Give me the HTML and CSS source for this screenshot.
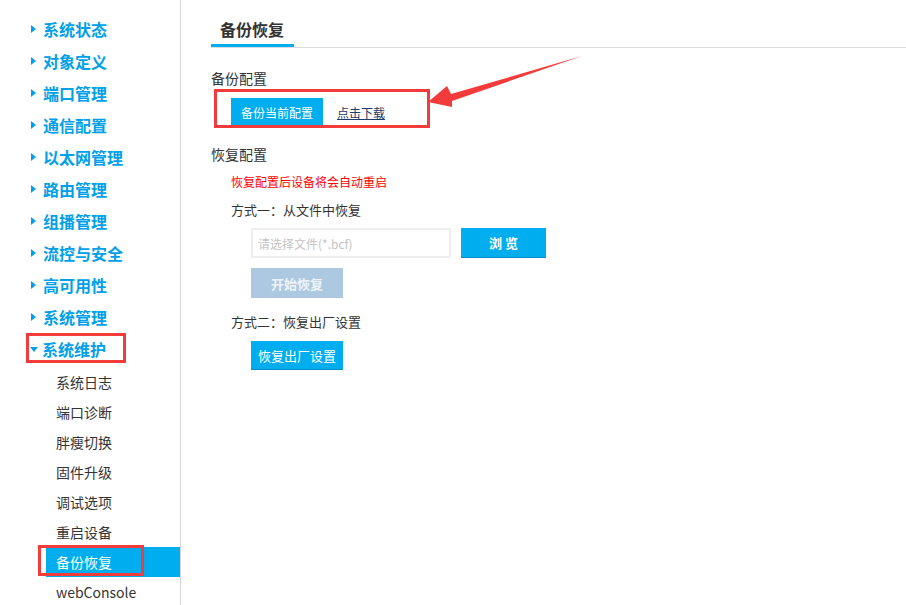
FILE: index.html
```html
<!DOCTYPE html>
<html lang="zh-CN">
<head>
    <meta charset="UTF-8">
    <title>备份恢复</title>
    <link rel="stylesheet" href="styles.css">
</head>
<body>
    <div class="page">
        <ul class="sidebar">
            <li class="nav-item"><span class="arrow"></span>系统状态</li>
            <li class="nav-item"><span class="arrow"></span>对象定义</li>
            <li class="nav-item"><span class="arrow"></span>端口管理</li>
            <li class="nav-item"><span class="arrow"></span>通信配置</li>
            <li class="nav-item"><span class="arrow"></span>以太网管理</li>
            <li class="nav-item"><span class="arrow"></span>路由管理</li>
            <li class="nav-item"><span class="arrow"></span>组播管理</li>
            <li class="nav-item"><span class="arrow"></span>流控与安全</li>
            <li class="nav-item"><span class="arrow"></span>高可用性</li>
            <li class="nav-item"><span class="arrow"></span>系统管理</li>
            <li class="nav-item open marked"><span class="arrow down"></span>系统维护</li>
            <li class="sub-list">
                <ul>
                    <li class="sub-item">系统日志</li>
                    <li class="sub-item">端口诊断</li>
                    <li class="sub-item">胖瘦切换</li>
                    <li class="sub-item">固件升级</li>
                    <li class="sub-item">调试选项</li>
                    <li class="sub-item">重启设备</li>
                    <li class="sub-item active">备份恢复</li>
                    <li class="sub-item">webConsole</li>
                </ul>
            </li>
        </ul>

        <div class="content">
            <div class="page-head">
                <span class="page-title">备份恢复</span>
            </div>

            <div class="section-label first">备份配置</div>
            <div class="backup-row">
                <button class="btn">备份当前配置</button>
                <a class="download-link" href="#">点击下载</a>
                <svg class="pointer" width="170" height="65" viewBox="0 0 170 65">
                    <polygon points="8,52 27,36 31,44 162,6 32,51 32,57" fill="#f43b3b"/>
                </svg>
            </div>

            <div class="section-label restore">恢复配置</div>
            <div class="restore-box">
                <div class="warning">恢复配置后设备将会自动重启</div>
                <div class="way">方式一：从文件中恢复</div>
                <div class="way-body">
                    <div class="file-row">
                        <input class="file-input" type="text" placeholder="请选择文件(*.bcf)">
                        <button class="btn btn-browse">浏 览</button>
                    </div>
                    <button class="btn btn-disabled">开始恢复</button>
                </div>
                <div class="way second">方式二：恢复出厂设置</div>
                <div class="way-body">
                    <button class="btn btn-factory">恢复出厂设置</button>
                </div>
            </div>
        </div>
    </div>
</body>
</html>
```

FILE: styles.css
```css
body {
    margin: 0;
    font-family: "Noto Sans CJK SC", "Liberation Sans", sans-serif;
    color: #333;
    background-color: #fff;
    overflow: hidden;
}

.page {
    display: flex;
    height: 605px;
}

ul {
    list-style: none;
    margin: 0;
    padding: 0;
}

/* left menu */
.sidebar {
    width: 180px;
    flex-shrink: 0;
    border-right: 1px solid #d4d4d4;
    padding-top: 13px;
}

.nav-item {
    position: relative;
    height: 32px;
    line-height: 32px;
    padding-left: 31px;
    font-size: 16px;
    font-weight: bold;
    color: #00a0e9;
    display: flex;
    align-items: center;
}

.arrow {
    width: 0;
    height: 0;
    border-left: 5px solid #00a0e9;
    border-top: 4px solid transparent;
    border-bottom: 4px solid transparent;
    margin-right: 7px;
}

.arrow.down {
    border-left: 4px solid transparent;
    border-right: 4px solid transparent;
    border-top: 5px solid #00a0e9;
    border-bottom: none;
    margin-right: 4px;
    margin-left: -1px;
}

.marked::after {
    content: "";
    position: absolute;
    left: 26px;
    top: 0;
    width: 100px;
    height: 30px;
    border: 3px solid #f43b3b;
    box-sizing: border-box;
}

.sub-list ul {
    padding-top: 2px;
}

.sub-item {
    position: relative;
    height: 30px;
    line-height: 30px;
    margin-left: 46px;
    padding-left: 10px;
    font-size: 14px;
    color: #333;
}

.sub-item.active {
    background-color: #00aeef;
    color: #fff;
}

.sub-item.active::after {
    content: "";
    position: absolute;
    left: -8px;
    top: -2px;
    width: 106px;
    height: 31px;
    border: 3px solid #f43b3b;
    box-sizing: border-box;
}

/* main area */
.content {
    flex: 1;
    padding-left: 30px;
}

.page-head {
    padding-top: 14px;
    border-bottom: 1px solid #ddd;
}

.page-title {
    display: inline-block;
    padding: 0 10px 0 9px;
    line-height: 30px;
    font-size: 16px;
    font-weight: bold;
    border-bottom: 3px solid #00aeef;
    vertical-align: top;
}

.section-label {
    font-size: 14px;
    line-height: 20px;
}

.section-label.first {
    margin-top: 20px;
}

.section-label.restore {
    margin-top: 17px;
}

.backup-row {
    position: relative;
    display: flex;
    align-items: center;
    margin-top: 10px;
    margin-left: 20px;
}

.backup-row::after {
    content: "";
    position: absolute;
    left: -17px;
    top: -9px;
    width: 216px;
    height: 39px;
    border: 3px solid #f43b3b;
    box-sizing: border-box;
}

.pointer {
    position: absolute;
    left: 189px;
    top: -48px;
}

.btn {
    width: 92px;
    height: 29px;
    border: none;
    border-bottom: 1px solid #0b8ec2;
    background-color: #00aeef;
    color: #fff;
    font-family: inherit;
    font-size: 12px;
    padding: 0;
    cursor: pointer;
}

.download-link {
    margin-left: 14px;
    font-size: 12px;
    color: #1e3a66;
    text-decoration: underline;
}

.restore-box {
    padding-left: 20px;
}

.warning {
    margin-top: 8px;
    font-size: 12px;
    line-height: 20px;
    color: #f00;
}

.way {
    margin-top: 8px;
    font-size: 13px;
    line-height: 20px;
}

.way.second {
    margin-top: 14px;
}

.way-body {
    padding-left: 20px;
}

.file-row {
    display: flex;
    margin-top: 8px;
}

.file-input {
    width: 200px;
    height: 30px;
    box-sizing: border-box;
    border: 2px solid #eee;
    padding: 0 5px;
    font-family: inherit;
    font-size: 12px;
    outline: none;
}

.file-input::placeholder {
    color: #c4c4c4;
}

.btn-browse {
    width: 85px;
    height: 30px;
    margin-left: 10px;
    font-size: 13px;
    font-weight: bold;
}

.btn-disabled {
    display: block;
    height: 30px;
    margin-top: 10px;
    border-bottom: none;
    background-color: #adc9e1;
    color: #eef3f8;
    font-size: 13px;
    font-weight: bold;
    cursor: default;
}

.btn-factory {
    display: block;
    margin-top: 9px;
    font-size: 13px;
}
```
